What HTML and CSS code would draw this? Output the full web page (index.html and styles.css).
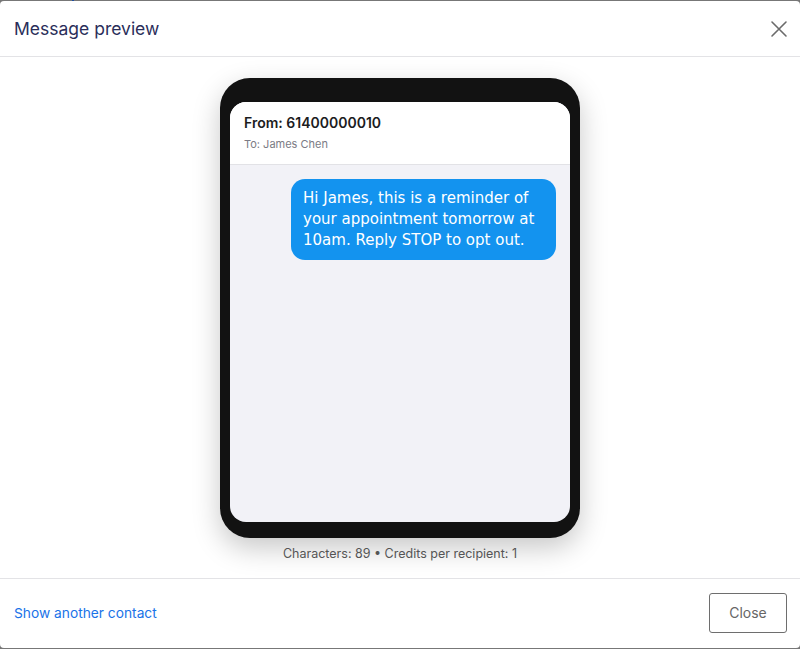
FILE: index.html
```html
<!DOCTYPE html>
<html>
<head>
<meta charset="utf-8">
<link rel="stylesheet" href="styles.css">
</head>
<body>
<div class="backdrop-link"></div>
<div class="modal">
  <div class="modal-header">
    <h1 class="modal-title">Message preview</h1>
    <button class="icon-close" aria-label="Close">
      <svg width="18" height="18" viewBox="0 0 18 18"><path d="M2 2 L16 16 M16 2 L2 16" stroke="#6b6b6b" stroke-width="1.6" stroke-linecap="round" fill="none"/></svg>
    </button>
  </div>
  <div class="modal-body">
    <div class="phone">
      <div class="screen">
        <div class="screen-head">
          <div class="from">From: 61400000010</div>
          <div class="to">To: James Chen</div>
        </div>
        <div class="thread">
          <div class="bubble">Hi James, this is a reminder of your appointment tomorrow at 10am. Reply STOP to opt out.</div>
        </div>
      </div>
    </div>
    <div class="meta">Characters: 89 • Credits per recipient: 1</div>
  </div>
  <div class="modal-footer">
    <a class="link" href="#">Show another contact</a>
    <button class="btn-close">Close</button>
  </div>
</div>
</body>
</html>
```

FILE: styles.css
```css
html, body {
  margin: 0;
  padding: 0;
  height: 649px;
  overflow: hidden;
}
body {
  background: #777777;
  font-family: Inter, "Noto Sans", sans-serif;
  position: relative;
}
.backdrop-link {
  position: absolute;
  left: 72px;
  top: 0;
  width: 2px;
  height: 1px;
  background: #1d4ea0;
}
.modal {
  margin-top: 1px;
  height: 647px;
  background: #ffffff;
  border-radius: 4px;
  display: flex;
  flex-direction: column;
}
.modal-header {
  height: 55px;
  flex: none;
  border-bottom: 1px solid #e3e3e6;
  display: flex;
  align-items: center;
  justify-content: space-between;
  padding: 0 12px 0 14px;
}
.modal-title {
  margin: 0;
  font-size: 17.5px;
  font-weight: 400;
  color: #2a2e5a;
}
.icon-close {
  border: 0;
  background: none;
  padding: 0;
  width: 18px;
  height: 18px;
  cursor: pointer;
}
.modal-body {
  flex: 1;
  display: flex;
  flex-direction: column;
  align-items: center;
  padding-top: 21px;
}
.phone {
  width: 340px;
  height: 420px;
  background: #121212;
  border-radius: 30px;
  padding: 24px 10px 16px;
  box-shadow: 0 10px 28px rgba(0, 0, 0, 0.22);
}
.screen {
  height: 100%;
  background: #f2f2f7;
  border-radius: 16px;
  overflow: hidden;
  display: flex;
  flex-direction: column;
}
.screen-head {
  background: #ffffff;
  border-bottom: 1px solid #e2e2e6;
  padding: 0 14px;
  box-sizing: border-box;
  height: 63px;
  flex: none;
}
.from {
  padding-top: 12px;
  font-size: 14px;
  font-weight: 600;
  color: #1c1c1e;
  line-height: 18px;
}
.to {
  margin-top: 5px;
  font-size: 11px;
  color: #7b7b85;
  line-height: 14px;
}
.thread {
  display: flex;
  justify-content: flex-end;
  padding: 14px 14px 0;
}
.bubble {
  width: 241px;
  background: #1393ef;
  color: #ffffff;
  font-family: "DejaVu Sans", sans-serif;
  font-size: 15px;
  line-height: 21px;
  padding: 9px 12px 9px;
  border-radius: 14px;
}
.meta {
  margin-top: 8px;
  font-size: 12.5px;
  color: #555555;
  line-height: 16px;
}
.modal-footer {
  height: 67px;
  flex: none;
  border-top: 1px solid #e3e3e6;
  display: flex;
  align-items: center;
  justify-content: space-between;
  padding: 0 13px 2px 14px;
}
.link {
  color: #1a73e8;
  font-size: 13.75px;
  text-decoration: none;
}
.btn-close {
  width: 78px;
  height: 40px;
  background: #ffffff;
  border: 1px solid #6e6e6e;
  border-radius: 3px;
  font-family: Inter, "Noto Sans", sans-serif;
  font-size: 14px;
  color: #666666;
}
```
